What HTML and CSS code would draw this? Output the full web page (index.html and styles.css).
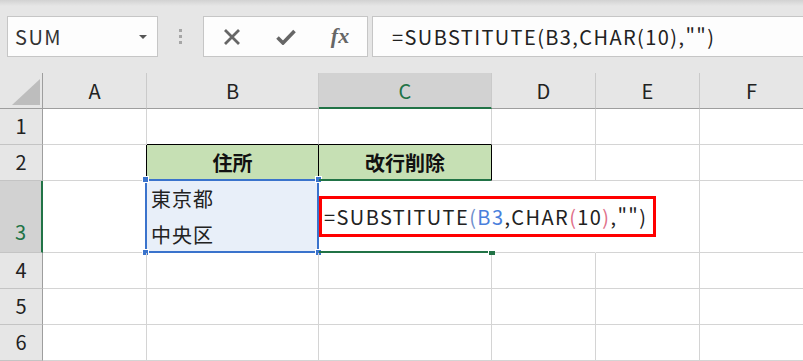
FILE: index.html
```html
<!DOCTYPE html>
<html lang="ja">
<head>
  <meta charset="UTF-8" />
  <title>SUBSTITUTE 改行削除</title>
  <link rel="stylesheet" href="styles.css">
</head>
<body>
  <div class="toolbar">
    <div class="namebox">
      <span>SUM</span>
      <span class="caret"></span>
    </div>
    <div class="grip"><i></i><i></i><i></i></div>
    <div class="fbtns">
      <div class="fbtn">
        <svg width="18" height="16" viewBox="0 0 18 16"><path d="M2 1 L16 15 M16 1 L2 15" stroke="#666" stroke-width="2.8" fill="none"/></svg>
      </div>
      <div class="fbtn">
        <svg width="20" height="16" viewBox="0 0 20 16"><path d="M1.5 8.5 L7 14 L18.5 2" stroke="#666" stroke-width="3.6" fill="none"/></svg>
      </div>
      <div class="fbtn"><span class="fx">fx</span></div>
    </div>
    <div class="fbar">=SUBSTITUTE(B3,CHAR(10),"")</div>
  </div>

  <div class="sheet">
    <div class="hd corner"><svg width="28" height="26" viewBox="0 0 28 26"><polygon points="28,0 28,26 0,26" fill="#bdbdbd"/></svg></div>
    <div class="hd">A</div>
    <div class="hd">B</div>
    <div class="hd hd-sel">C</div>
    <div class="hd">D</div>
    <div class="hd">E</div>
    <div class="hd">F</div>

    <div class="rh">1</div>
    <div class="c"></div>
    <div class="c line-b"></div>
    <div class="c line-b"></div>
    <div class="c"></div>
    <div class="c"></div>
    <div class="c"></div>

    <div class="rh">2</div>
    <div class="c line-r"></div>
    <div class="c head">住所</div>
    <div class="c head">改行削除</div>
    <div class="c"></div>
    <div class="c"></div>
    <div class="c"></div>

    <div class="rh rh-sel">3</div>
    <div class="c"></div>
    <div class="c addr">
      <span>東京都</span>
      <span>中央区</span>
      <div class="sel-range">
        <i class="hdl tl"></i><i class="hdl tr"></i><i class="hdl bl"></i><i class="hdl br"></i>
      </div>
    </div>
    <div class="c active no-r">
      <div class="sel-active"><i class="fill-hdl"></i></div>
      <span class="redbox">=SUBSTITUTE<span class="p1">(</span><span class="ref">B3</span>,CHAR<span class="p2">(</span>10<span class="p2">)</span>,"")</span>
    </div>
    <div class="c no-r"></div>
    <div class="c"></div>
    <div class="c"></div>

    <div class="rh">4</div>
    <div class="c"></div>
    <div class="c"></div>
    <div class="c"></div>
    <div class="c"></div>
    <div class="c"></div>
    <div class="c"></div>

    <div class="rh">5</div>
    <div class="c"></div>
    <div class="c"></div>
    <div class="c"></div>
    <div class="c"></div>
    <div class="c"></div>
    <div class="c"></div>

    <div class="rh">6</div>
    <div class="c"></div>
    <div class="c"></div>
    <div class="c"></div>
    <div class="c"></div>
    <div class="c"></div>
    <div class="c"></div>
  </div>
</body>
</html>
```

FILE: styles.css
```css
html, body {
  margin: 0;
  overflow: hidden;
}

body {
  width: 803px;
  height: 361px;
  background: #e6e6e6;
  font-family: "Noto Sans CJK JP", "Noto Sans", sans-serif;
  color: #222;
}

/* formula toolbar */
.toolbar {
  height: 73px;
  box-sizing: border-box;
  display: flex;
  align-items: flex-start;
  padding: 16px 0 0 7px;
  background: linear-gradient(#d2d2d2 0, #e6e6e6 6px);
}

.namebox {
  width: 151px;
  height: 41px;
  box-sizing: border-box;
  border: 1px solid #c6c6c6;
  background: #fdfdfd;
  display: flex;
  align-items: center;
  padding-left: 7px;
  font-size: 20px;
  letter-spacing: 1.5px;
  color: #333;
}

.caret {
  margin-left: auto;
  margin-right: 10px;
  width: 0;
  height: 0;
  border-left: 4px solid transparent;
  border-right: 4px solid transparent;
  border-top: 4px solid #555;
}

.grip {
  width: 45px;
  height: 41px;
  display: flex;
  flex-direction: column;
  align-items: center;
  justify-content: center;
  gap: 3px;
}

.grip i {
  display: block;
  width: 3px;
  height: 3px;
  background: #a6a6a6;
}

.fbtns {
  width: 165px;
  height: 41px;
  box-sizing: border-box;
  border: 1px solid #c6c6c6;
  background: #fdfdfd;
  display: flex;
  padding-left: 1px;
}

.fbtn {
  width: 54px;
  display: flex;
  align-items: center;
  justify-content: center;
}

.fx {
  font-family: "Liberation Serif", serif;
  font-style: italic;
  font-weight: bold;
  font-size: 22px;
  color: #666;
  margin-top: -2px;
}

.fbar {
  flex: 1;
  margin-left: 4px;
  height: 41px;
  box-sizing: border-box;
  border: 1px solid #c6c6c6;
  border-right: none;
  background: #fdfdfd;
  display: flex;
  align-items: center;
  padding-left: 19px;
  font-size: 20px;
  letter-spacing: 1.4px;
  color: #222;
  white-space: nowrap;
}

/* sheet */
.sheet {
  display: grid;
  grid-template-columns: 43px 104px 172px 173px 104px 104px 104px;
  grid-template-rows: 36px 36px 36px 72px 36px 36px 36px;
  background: #fff;
  font-size: 20px;
}

.sheet > div {
  box-sizing: border-box;
  min-width: 0;
}

.hd {
  background: #e6e6e6;
  border-right: 1px solid #cacaca;
  border-bottom: 1px solid #9e9e9e;
  display: flex;
  align-items: center;
  justify-content: center;
}

.hd-sel {
  background: #d2d2d2;
  color: #217346;
  border-bottom: 2px solid #217346;
}

.corner {
  border-right: 1px solid #9e9e9e;
  align-items: flex-end;
  justify-content: flex-end;
  padding: 0 2px 3px 0;
}

.corner svg {
  display: block;
}

.rh {
  background: #e6e6e6;
  border-right: 1px solid #9e9e9e;
  border-bottom: 1px solid #c4c4c4;
  display: flex;
  align-items: flex-end;
  justify-content: center;
  line-height: 36px;
}

.rh-sel {
  background: #d2d2d2;
  color: #217346;
  border-right: 2px solid #217346;
  padding-bottom: 2px;
}

.c {
  border-right: 1px solid #d4d4d4;
  border-bottom: 1px solid #d4d4d4;
  position: relative;
}

.line-b {
  border-bottom-color: #000;
}

.line-r {
  border-right-color: #000;
}

.no-r {
  border-right-color: transparent;
}

.head {
  background: #c6e0b4;
  border-right-color: #000;
  font-weight: bold;
  display: flex;
  align-items: center;
  justify-content: center;
  color: #111;
}

.addr {
  background: #e8eff9;
  display: flex;
  flex-direction: column;
  padding-left: 4px;
  line-height: 36px;
  letter-spacing: 1px;
  color: #222;
}

.sel-range {
  position: absolute;
  top: -2px;
  left: -2px;
  right: -1px;
  bottom: -1px;
  border: 2px solid #3a73cc;
}

.hdl {
  position: absolute;
  width: 5px;
  height: 5px;
  background: #3a73cc;
  border: 1px solid #fff;
}

.hdl.tl { top: -5px; left: -5px; }
.hdl.tr { top: -5px; right: -5px; }
.hdl.bl { bottom: -5px; left: -5px; }
.hdl.br { bottom: -5px; right: -5px; }

.active {
  display: flex;
  align-items: center;
  z-index: 1;
}

.sel-active {
  position: absolute;
  top: -2px;
  left: 0;
  right: 0;
  bottom: -1px;
  border-top: 2px solid #217346;
  border-bottom: 2px solid #217346;
}

.fill-hdl {
  position: absolute;
  right: -4px;
  bottom: -4px;
  width: 6px;
  height: 4px;
  background: #217346;
  border-left: 1px solid #fff;
}

.redbox {
  height: 41px;
  box-sizing: border-box;
  border: 3px solid #f00;
  background: #fff;
  display: flex;
  align-items: center;
  padding: 0 6px 0 2px;
  letter-spacing: 1.4px;
  white-space: nowrap;
  color: #222;
}

.ref {
  color: #4a7fdc;
}

.p1 {
  color: #6f8fcc;
}

.p2 {
  color: #e0708a;
}
```
